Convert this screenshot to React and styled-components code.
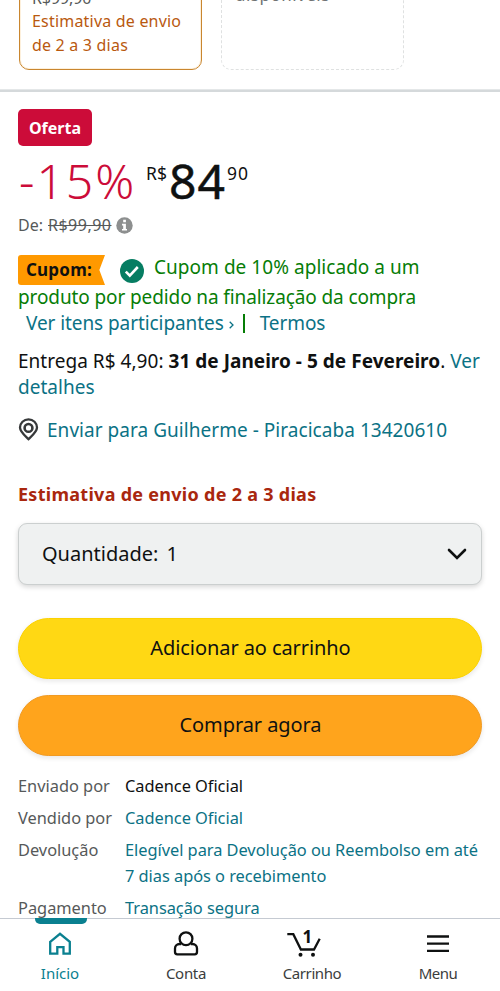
import React from "react";
import styled, { createGlobalStyle } from "styled-components";

const GlobalStyle = createGlobalStyle`
  * {
    box-sizing: border-box;
  }
  body {
    margin: 0;
    background: #fff;
    color: #0f1111;
    font-family: "Noto Sans", "Open Sans", sans-serif;
    overflow: hidden;
  }
`;

const Page = styled.div`
  display: flex;
  flex-direction: column;
  width: 500px;
  height: 991px;
  overflow: hidden;
`;

const Content = styled.main`
  height: 918px;
  overflow: hidden;
`;

/* ---- variations at the top ---- */
const Offers = styled.div`
  display: flex;
  align-items: flex-end;
  gap: 19px;
  height: 70px;
  padding-left: 19px;
  overflow: hidden;
`;

const OfferCard = styled.div`
  display: flex;
  flex-direction: column;
  flex: none;
  justify-content: ${(p) => (p.$empty ? "flex-start" : "flex-end")};
  width: 183px;
  height: 122px;
  padding: ${(p) => (p.$empty ? "34px 13px 0" : "0 12px 12px")};
  border: ${(p) => (p.$empty ? "1px dashed #dfe1e1" : "1px solid #c9862f")};
  border-radius: 10px;
  box-shadow: ${(p) => (p.$empty ? "none" : "inset 0 0 0 1px #fdf0dc")};
  color: ${(p) => (p.$empty ? "#6f7373" : "#b9590f")};
  font-size: ${(p) => (p.$empty ? 17 : 16)}px;
  line-height: 24px;
  letter-spacing: ${(p) => (p.$empty ? 0.5 : 0.2)}px;
`;

const OldPrice = styled.span`
  height: 23px;
  color: #565959;
  letter-spacing: -0.1px;
`;

const Divider = styled.div`
  height: 3px;
  margin-top: 19px;
  background: #d5d9db;
  border-top: 1px solid #e4e7e8;
`;

/* ---- product ---- */
const Product = styled.section`
  padding: 17px 18px 0;
`;

const Badge = styled.span`
  display: block;
  width: 74px;
  height: 37px;
  border-radius: 5px;
  background: #cc0c39;
  color: #fff;
  font-size: 16px;
  font-weight: 700;
  line-height: 38px;
  text-align: center;
`;

const Price = styled.div`
  display: flex;
  align-items: flex-start;
  height: 67px;
  padding-top: 9px;
  line-height: 51px;
`;

const Discount = styled.span`
  width: 128px;
  padding-left: 1px;
  color: #cc0c39;
  font-size: 48px;
  font-weight: 300;
  letter-spacing: 2px;
`;

const Whole = styled.span`
  width: 58px;
  font-size: 48px;
  font-weight: 400;
  letter-spacing: 1px;
  -webkit-text-stroke: 0.5px #0f1111;
`;

const Sup = styled.span`
  padding-top: 6px;
  width: 23px;
  font-size: 17.5px;
  line-height: 24px;
  letter-spacing: ${(p) => p.$spacing || 0}px;
`;

const ListPrice = styled.div`
  display: flex;
  align-items: center;
  gap: 5px;
  height: 24px;
  color: #565959;
  font-size: 16px;
  line-height: 24px;
  s {
    letter-spacing: 0.5px;
  }
  svg {
    margin-left: -1px;
  }
`;

const Coupon = styled.div`
  margin-top: 18px;
  height: 84px;
  color: #067d06;
  font-size: 19px;
`;

const CouponLine = styled.div`
  display: flex;
  align-items: ${(p) => p.$align || "flex-start"};
  height: ${(p) => p.$h}px;
  padding-left: ${(p) => p.$indent || 0}px;
  line-height: 26px;
  white-space: nowrap;
  letter-spacing: ${(p) => p.$spacing || 0}px;
`;

const CouponText = styled.span`
  line-height: 25px;
  letter-spacing: 0.04px;
`;

const CouponTag = styled.span`
  width: 87px;
  height: 30px;
  padding-left: 8px;
  border-radius: 3px 0 0 3px;
  background: #ff9900;
  clip-path: polygon(0 0, 100% 0, 93.5% 50%, 100% 100%, 0 100%);
  color: #0f1111;
  font-size: 17px;
  font-weight: 700;
  line-height: 30px;
  letter-spacing: 0.2px;
`;

const CheckIcon = styled.svg`
  flex: none;
  width: 24px;
  height: 24px;
  margin: 4px 10px 0 15px;
`;

const Link = styled.a`
  color: #0b7285;
`;

const Chevron = styled.svg`
  width: 5px;
  height: 8px;
  margin: 3px 9px 0 5px;
`;

const Bar = styled.span`
  width: 2px;
  height: 19px;
  margin-right: 15px;
  background: #067d06;
`;

const Delivery = styled.p`
  margin: 9px 0 0;
  font-size: 19px;
  line-height: 26px;
  letter-spacing: 0.03px;
  white-space: nowrap;
`;

const Location = styled.div`
  display: flex;
  align-items: center;
  gap: 8px;
  height: 28px;
  margin-top: 16px;
  font-size: 19px;
  letter-spacing: 0.04px;
  white-space: nowrap;
  svg {
    margin-bottom: 2px;
  }
`;

const Availability = styled.div`
  margin-top: 38px;
  color: #a9270e;
  font-size: 18px;
  font-weight: 700;
  line-height: 25px;
  letter-spacing: 0.28px;
`;

const Quantity = styled.div`
  display: flex;
  align-items: center;
  height: 62px;
  margin-top: 16px;
  padding: 0 14px 2px 23px;
  border: 1px solid #cbcfcf;
  border-radius: 9px;
  background: #eff1f1;
  box-shadow: 0 2px 5px rgba(15, 17, 17, 0.17);
  font-size: 20px;
  span {
    margin-left: 8px;
  }
  svg {
    margin-left: auto;
    margin-top: 2px;
  }
`;

const Button = styled.button`
  display: block;
  width: 100%;
  height: 61px;
  margin-top: ${(p) => (p.$buy ? 16 : 33)}px;
  padding: 0 0 3px 1px;
  border: 1px solid ${(p) => (p.$buy ? "#f19a22" : "#fcd200")};
  border-radius: 31px;
  background: ${(p) => (p.$buy ? "#ffa41c" : "#ffd814")};
  box-shadow: 0 2px 5px rgba(15, 17, 17, 0.1);
  color: #0f1111;
  font-family: inherit;
  font-size: 20px;
  letter-spacing: -0.08px;
`;

const Details = styled.dl`
  display: grid;
  grid-template-columns: 107px 1fr;
  row-gap: 6px;
  margin: 17px 0 0;
  font-size: 16.4px;
  line-height: 26px;
  white-space: nowrap;
  dt {
    color: #565959;
    letter-spacing: -0.02px;
  }
  dd {
    margin: 0;
    letter-spacing: -0.04px;
  }
`;

/* ---- bottom navigation ---- */
const Nav = styled.nav`
  display: grid;
  grid-template-columns: repeat(4, 126px);
  flex: none;
  width: 504px;
  height: 73px;
  margin-left: -2px;
  border-top: 1px solid #c5cad2;
  background: #fff;
`;

const NavItem = styled.div`
  display: flex;
  flex-direction: column;
  align-items: center;
  padding-right: 2px;
  color: ${(p) => (p.$active ? "#0a8090" : "#3b3d3d")};
  font-size: 15px;
  line-height: 22px;
  letter-spacing: ${(p) => p.$spacing || 0}px;
`;

const NavIcon = styled.svg`
  flex: none;
  height: 28px;
  margin: 6px 0 4px;
  fill: none;
  stroke: currentColor;
  color: ${(p) => (p.$active ? "#0a8090" : "#0f1111")};
  stroke-width: 2.3;
`;

const CartCount = styled.text`
  fill: #0f1111;
  stroke: none;
  font-size: 17px;
  font-weight: 700;
`;

const Indicator = styled.div`
  width: 52px;
  height: 6px;
  margin: -1px 0 0 1px;
  border-radius: 0 0 5px 5px;
  background: ${(p) => (p.$active ? "#0a8090" : "transparent")};
`;

const InfoIcon = () => (
  <svg width="17" height="17" viewBox="0 0 17 17">
    <circle cx="8.5" cy="8.5" r="8.2" fill="#8d8f8f" />
    <path d="M7.2 2.8h2.7v2.5H7.2zM6 6.700h3.900v5.200h1.100v1.700H6v-1.700h1.200V8.400H6z" fill="#fff" />
  </svg>
);

const PinIcon = () => (
  <svg width="21" height="23" viewBox="0 0 21 23" fill="none" stroke="#37393a">
    <path
      d="M10.5 21.2C8.4 19 2 14.2 2 9.6a8.5 8.3 0 0 1 17 0c0 4.6-6.4 9.4-8.5 11.6z"
      strokeWidth="2.3"
    />
    <circle cx="10.5" cy="9.9" r="3.9" strokeWidth="2.6" />
  </svg>
);

const HomeIcon = () => (
  <NavIcon $active width="24" viewBox="0 0 24 28">
    <path d="M2.2 11.8L12 3.800l9.800 8v11.900h-6.300v-6.500H9.300v6.500H2.200z" />
  </NavIcon>
);

const UserIcon = () => (
  <NavIcon width="26" viewBox="0 0 26 28">
    <circle cx="13" cy="8.700" r="6.400" />
    <path d="M8.200 14H6.500A4.500 4.500 0 0 0 2 18.500V22q0 2.300 2.300 2.300h17.400Q24 24.300 24 22v-3.500a4.500 4.500 0 0 0-4.500-4.500h-1.700" />
  </NavIcon>
);

const CartIcon = () => (
  <NavIcon width="50" viewBox="0 0 50 28">
    <path d="M0.3 4.200h6L13.900 19.500H27l5.700-10.700" />
    <circle cx="13.500" cy="24.800" r="2" fill="currentColor" stroke="none" />
    <circle cx="26" cy="24.800" r="2" fill="currentColor" stroke="none" />
    <CartCount x="15.500" y="13">
      1
    </CartCount>
  </NavIcon>
);

const MenuIcon = () => (
  <NavIcon width="22" viewBox="0 0 22 28">
    <path d="M0 6.500h22M0 13.700h22M0 20.900h22" />
  </NavIcon>
);

const details = [
  { label: "Enviado por", lines: ["Cadence Oficial"] },
  { label: "Vendido por", lines: ["Cadence Oficial"], link: true },
  {
    label: "Devolução",
    lines: ["Elegível para Devolução ou Reembolso em até", "7 dias após o recebimento"],
    link: true,
  },
  { label: "Pagamento", lines: ["Transação segura"], link: true },
];

const tabs = [
  { label: "Início", icon: <HomeIcon />, active: true, spacing: 0 },
  { label: "Conta", icon: <UserIcon />, spacing: -0.3 },
  { label: "Carrinho", icon: <CartIcon />, spacing: -0.4 },
  { label: "Menu", icon: <MenuIcon />, spacing: -0.5 },
];

function App() {
  return (
    <Page>
      <GlobalStyle />
      <Content>
        <Offers>
          <OfferCard>
            <OldPrice>R$99,90</OldPrice>
            <span>Estimativa de envio</span>
            <span>de 2 a 3 dias</span>
          </OfferCard>
          <OfferCard $empty>disponíveis</OfferCard>
        </Offers>
        <Divider />

        <Product>
          <Badge>Oferta</Badge>
          <Price>
            <Discount>-15%</Discount>
            <Sup>R$</Sup>
            <Whole>84</Whole>
            <Sup $spacing={1}>90</Sup>
          </Price>
          <ListPrice>
            <span>De:</span>
            <s>R$99,90</s>
            <InfoIcon />
          </ListPrice>

          <Coupon>
            <CouponLine $h={29}>
              <CouponTag>Cupom:</CouponTag>
              <CheckIcon viewBox="0 0 24 24">
                <circle cx="12" cy="12" r="12" fill="#067d62" />
                <path d="M5.8 12.6l4 4 8-8.6" fill="none" stroke="#fff" strokeWidth="2.6" />
              </CheckIcon>
              <CouponText>Cupom de 10% aplicado a um</CouponText>
            </CouponLine>
            <CouponLine $h={26} $spacing={-0.11}>
              produto por pedido na finalização da compra
            </CouponLine>
            <CouponLine $h={26} $align="center" $indent={8} $spacing={-0.08}>
              <Link>Ver itens participantes</Link>
              <Chevron viewBox="0 0 5 8">
                <path d="M0.7 0.7L4 4 0.7 7.3" fill="none" stroke="#0b7285" strokeWidth="1.3" />
              </Chevron>
              <Bar />
              <Link>Termos</Link>
            </CouponLine>
          </Coupon>

          <Delivery>
            Entrega R$ 4,90: <b>31 de Janeiro - 5 de Fevereiro</b>. <Link>Ver</Link>
            <br />
            <Link>detalhes</Link>
          </Delivery>

          <Location>
            <PinIcon />
            <Link>Enviar para Guilherme - Piracicaba 13420610</Link>
          </Location>

          <Availability>Estimativa de envio de 2 a 3 dias</Availability>

          <Quantity>
            Quantidade: <span>1</span>
            <svg width="20" height="13" viewBox="0 0 20 13">
              <path d="M2 2l8 8 8-8" fill="none" stroke="#0f1111" strokeWidth="2.6" strokeLinecap="round" />
            </svg>
          </Quantity>
          <Button>Adicionar ao carrinho</Button>
          <Button $buy>Comprar agora</Button>

          <Details>
            {details.map((d) => (
              <React.Fragment key={d.label}>
                <dt>{d.label}</dt>
                <dd>
                  {d.lines.map((line) => (
                    <div key={line}>{d.link ? <Link>{line}</Link> : line}</div>
                  ))}
                </dd>
              </React.Fragment>
            ))}
          </Details>
        </Product>
      </Content>

      <Nav>
        {tabs.map((t) => (
          <NavItem key={t.label} $active={t.active} $spacing={t.spacing}>
            <Indicator $active={t.active} />
            {t.icon}
            {t.label}
          </NavItem>
        ))}
      </Nav>
    </Page>
  );
}

export default App;
